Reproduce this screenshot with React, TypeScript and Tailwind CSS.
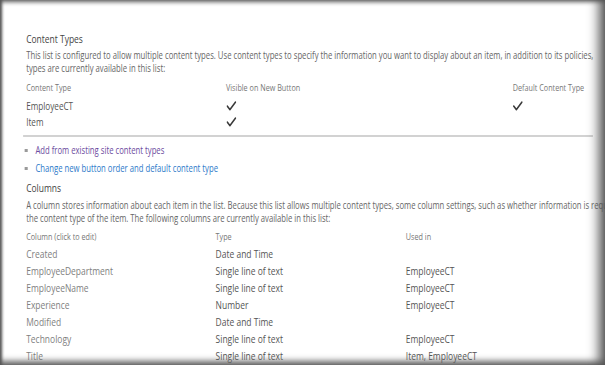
import React from 'react';

const contentTypes = [
  { name: 'EmployeeCT', visible: true, isDefault: true },
  { name: 'Item', visible: true, isDefault: false },
];

const columns = [
  { name: 'Created', type: 'Date and Time', usedIn: '' },
  { name: 'EmployeeDepartment', type: 'Single line of text', usedIn: 'EmployeeCT' },
  { name: 'EmployeeName', type: 'Single line of text', usedIn: 'EmployeeCT' },
  { name: 'Experience', type: 'Number', usedIn: 'EmployeeCT' },
  { name: 'Modified', type: 'Date and Time', usedIn: '' },
  { name: 'Technology', type: 'Single line of text', usedIn: 'EmployeeCT' },
  { name: 'Title', type: 'Single line of text', usedIn: 'Item, EmployeeCT' },
];

const Check = () => (
  <svg width="13" height="10" viewBox="0 0 13 10" className="block">
    <path d="M1.2 5.2 L4.6 8.6 L11.8 1.2" fill="none" stroke="#3a3a3a" strokeWidth="1.9" strokeLinecap="round" strokeLinejoin="round" />
  </svg>
);

const Bullet = () => <span className="block w-[4px] h-[3px] bg-[#9a9a9a] ml-[-2px] mr-[10px]" />;

const App: React.FC = () => {
  return (
    <div className="relative w-[605px] h-[365px] overflow-hidden bg-white font-['Open_Sans',sans-serif]">
      {/* the shot is squeezed sideways, so the page is laid out wider and scaled back */}
      <div className="w-[786px] origin-top-left scale-x-[0.77] pt-[32px] px-[34px]">
        {/* Content Types */}
        <h2 className="text-[11px] leading-[14px] text-[#444]">Content Types</h2>
        <p className="mt-[3px] whitespace-nowrap text-[10px] leading-[13px] text-[#666]">
          This list is configured to allow multiple content types. Use content types to specify the information you want to display about an item, in addition to its policies,
          <br />
          types are currently available in this list:
        </p>

        <div className="mt-[7px] grid grid-cols-[259.5px_372.5px_1fr] h-[12px] leading-[12px] text-[9.4px] text-[#777] whitespace-nowrap">
          <span>Content Type</span>
          <span>Visible on New Button</span>
          <span>Default Content Type</span>
        </div>
        <div className="mt-[4px]">
          {contentTypes.map((ct) => (
            <div key={ct.name} className="grid grid-cols-[259.5px_372.5px_1fr] items-center h-[16px] leading-[16px] text-[10.6px] text-[#555]">
              <span>{ct.name}</span>
              <span>{ct.visible && <Check />}</span>
              <span>{ct.isDefault && <Check />}</span>
            </div>
          ))}
        </div>

        <div className="mt-[5px] ml-[-4px] w-[740px] h-[2px] bg-[#d2d2d2]" />

        <ul className="mt-[4px] text-[10px] leading-[18px]">
          <li className="flex items-center">
            <Bullet />
            <a href="#" className="text-[#6b4a9e]">Add from existing site content types</a>
          </li>
          <li className="flex items-center">
            <Bullet />
            <a href="#" className="text-[#2b79c9]">Change new button order and default content type</a>
          </li>
        </ul>

        {/* Columns */}
        <h2 className="mt-[5px] text-[11px] leading-[12px] text-[#444]">Columns</h2>
        <div className="mt-[5px] w-[752px] overflow-hidden">
          <p className="whitespace-nowrap text-[10px] leading-[13px] text-[#666]">
            A column stores information about each item in the list. Because this list allows multiple content types, some column settings, such as whether information is required or optional for a column, can now be specified by
            <br />
            the content type of the item. The following columns are currently available in this list:
          </p>
        </div>

        <div className="mt-[6px] grid grid-cols-[246px_247px_1fr] h-[12px] leading-[12px] text-[9.4px] text-[#777]">
          <span>Column (click to edit)</span>
          <span>Type</span>
          <span>Used in</span>
        </div>
        <div className="mt-[2px]">
          {columns.map((c) => (
            <div key={c.name} className="grid grid-cols-[246px_247px_1fr] h-[17px] leading-[17px] text-[11px]">
              <a href="#" className="text-[#808080]">{c.name}</a>
              <span className="text-[#555]">{c.type}</span>
              <span className="text-[#555]">{c.usedIn}</span>
            </div>
          ))}
        </div>
      </div>

      <div className="pointer-events-none absolute inset-0 shadow-[inset_3px_0_3px_-1px_#555,inset_-14px_0_12px_-8px_#555,inset_0_4px_4px_-2px_#666,inset_0_-7px_6px_-3px_#666]" />
    </div>
  );
};

export default App;
